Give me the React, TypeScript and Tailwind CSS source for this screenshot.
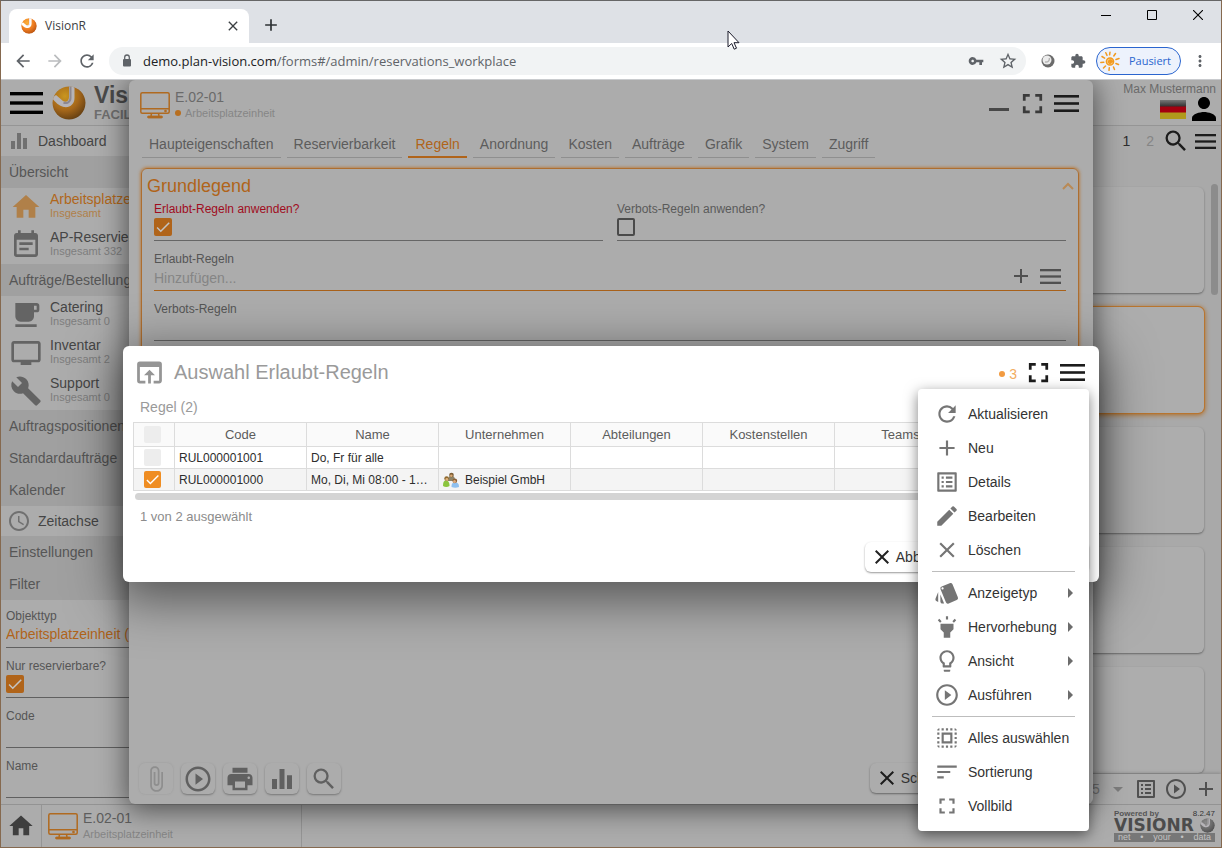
import React from "react";
import {
  MdAccessTime, MdAdd, MdArrowBack, MdArrowDropDown, MdArrowForward, MdArrowRight, MdAttachFile, MdBuild, MdCheck,
  MdClose, MdEdit, MdEqualizer, MdEventNote, MdFullscreen, MdHighlight, MdHome, MdLightbulbOutline,
  MdListAlt, MdLocalCafe, MdMoreVert, MdOpenInBrowser, MdPerson, MdPlayCircleOutline, MdPrint, MdRefresh,
  MdSearch, MdSelectAll, MdSort, MdStarBorder, MdStyle, MdTv, MdVpnKey,
} from "react-icons/md";

type Icon = React.ComponentType<{ className?: string }>;

function Burger({ className }: { className: string }) {
  return (
    <svg viewBox="0 0 25 17" preserveAspectRatio="none" fill="currentColor" className={className} aria-hidden="true">
      <rect width="25" height="2.6" />
      <rect y="7.2" width="25" height="2.6" />
      <rect y="14.4" width="25" height="2.6" />
    </svg>
  );
}

function Sphere({ className, id, dim, mono }: { className: string; id: string; dim?: boolean; mono?: boolean }) {
  const light = mono ? "#8a8a8a" : dim ? "#c9961f" : "#fbb03b";
  const mid = mono ? "#6c6c6c" : dim ? "#a5671a" : "#ee7d22";
  const dark = mono ? "#4c4c4c" : dim ? "#5f3c12" : "#b5500f";
  const band = dim || mono ? "#b6b4b8" : "#ffffff";
  return (
    <svg viewBox="0 0 34 34" className={className} aria-hidden="true">
      <defs>
        <radialGradient id={id} cx="0.38" cy="0.3" r="0.75">
          <stop offset="0" stopColor={light} />
          <stop offset="0.55" stopColor={mid} />
          <stop offset="1" stopColor={dark} />
        </radialGradient>
        <clipPath id={id + "-clip"}><circle cx="17" cy="17" r="16.5" /></clipPath>
      </defs>
      <g clipPath={`url(#${id}-clip)`}>
        <circle cx="17" cy="17" r="17" fill={`url(#${id})`} />
        <path d="M17 0v11c0 4-3 6-6 4L4 9 0 12c3 4 7 8 12 9 6 1 10.500-3 10.500-9V0z" fill={band} />
        <path d="M18.500 0v12c0 4-4 6-7 4.500" stroke={mono ? "#8a8a8a" : dim ? "#8d8890" : "#e9dfe6"} strokeWidth="2" fill="none" />
      </g>
    </svg>
  );
}

function Monitor() {
  return (
    <svg viewBox="0 0 30 27" className="h-[27px] w-[30px] shrink-0" fill="none" stroke="#b06a20" strokeWidth="1.500" aria-hidden="true">
      <rect x="0.800" y="0.800" width="28.400" height="20.400" rx="1.500" />
      <path d="M1 16.700h28M11.500 21.500l-.5 2.500M18.500 21.500l.5 2.500" />
      <rect x="7.500" y="24" width="15" height="2" rx="1" fill="#b06a20" strokeWidth="0.800" />
      <circle cx="25.500" cy="19" r="0.600" />
    </svg>
  );
}

function Check({ id, label, checked = false, dim = false, small = false }: { id: string; label?: string; checked?: boolean; dim?: boolean; small?: boolean }) {
  const tone = small
    ? "size-[17px] bg-[#ededed] checked:bg-[#ef8d22]"
    : "size-[18px] border-2 border-[#4a4a4a] checked:border-0 checked:bg-[#b0641a]";
  return (
    <span className="relative block w-fit">
      <input type="checkbox" id={id} aria-label={label} defaultChecked={checked} className={`peer block appearance-none rounded-xs ${tone}`} />
      <MdCheck className={`pointer-events-none absolute inset-0 hidden size-full peer-checked:block ${dim ? "text-[#c4c4c4]" : "text-white"}`} />
    </span>
  );
}

function BrowserChrome() {
  return (
    <header className="font-['Open_Sans','Noto_Sans',sans-serif]">
      <div className="flex h-[42px] items-end bg-[#dee1e6] pl-2">
        <div className="flex h-[34px] w-60 items-center rounded-t-lg bg-white pr-2 pl-3">
          <Sphere id="fav" className="size-4" />
          <span className="ml-2 flex-1 text-[12px] text-[#3c4043]">VisionR</span>
          <button aria-label="Tab schließen" className="flex size-4 items-center justify-center"><MdClose className="size-4 text-[#3c4043]" /></button>
        </div>
        <button aria-label="Neuer Tab" className="mb-2 ml-3 flex size-5 items-center justify-center"><MdAdd className="size-5 text-[#2c3033]" /></button>
        <div className="mb-[23px] ml-auto flex gap-9 pr-[18px]">
          <button aria-label="Minimieren">
            <svg viewBox="0 0 10 10" className="size-2.5"><path d="M0 5.500h10" stroke="#000" /></svg>
          </button>
          <button aria-label="Maximieren">
            <svg viewBox="0 0 10 10" className="size-2.5"><path d="M.5.5h9v9h-9z" fill="none" stroke="#000" /></svg>
          </button>
          <button aria-label="Schließen">
            <svg viewBox="0 0 10 10" className="size-2.5"><path d="M0 0l10 10M10 0L0 10" stroke="#000" strokeWidth="1.100" /></svg>
          </button>
        </div>
      </div>
      <div className="flex h-[37px] items-center border-b border-[#c9cbce] bg-white pl-3 text-[#5f6368]">
        <button aria-label="Zurück"><MdArrowBack className="size-5" /></button>
        <button aria-label="Vorwärts" className="ml-3 text-[#babcbe]"><MdArrowForward className="size-5" /></button>
        <button aria-label="Neu laden" className="ml-3"><MdRefresh className="size-5" /></button>
        <div className="ml-3 flex h-7 flex-1 items-center rounded-full bg-[#f1f3f4] pr-2 pl-2.5">
          <svg viewBox="0 0 16 16" className="size-4" aria-hidden="true">
            <rect x="4" y="6" width="8" height="7.500" rx="1" fill="#5f6368" />
            <path d="M5.700 6V4.300a2.300 2.300 0 014.600 0V6" fill="none" stroke="#5f6368" strokeWidth="1.300" />
          </svg>
          <a href="#/admin/reservations_workplace" className="ml-2 flex-1 text-[13px]">
            <span className="text-[#202124]">demo.plan-vision.com</span>/forms#/admin/reservations_workplace
          </a>
          <button aria-label="Passwörter"><MdVpnKey className="size-4" /></button>
          <button aria-label="Lesezeichen" className="ml-3.5"><MdStarBorder className="size-5" /></button>
        </div>
        <button aria-label="Erweiterung" className="ml-3.5">
          <svg viewBox="0 0 16 16" className="size-4">
            <circle cx="8" cy="8" r="6.500" fill="#6b6b6b" />
            <circle cx="7" cy="7" r="4.500" fill="#ececec" />
            <path d="M5 9c3 .5 4.500-1 4.500-4" stroke="#b5b5b5" strokeWidth="1.500" fill="none" />
          </svg>
        </button>
        <button aria-label="Erweiterungen" className="ml-3.5">
          <svg viewBox="0 0 24 24" className="size-4" fill="currentColor" aria-hidden="true">
            <path d="M20.500 11H19V7c0-1.100-.9-2-2-2h-4V3.500C13 2.120 11.880 1 10.500 1S8 2.120 8 3.500V5H4c-1.100 0-1.990.9-1.990 2v3.800H3.500c1.490 0 2.700 1.210 2.700 2.700s-1.210 2.700-2.700 2.700H2V20c0 1.100.9 2 2 2h3.800v-1.500c0-1.490 1.210-2.700 2.700-2.700s2.700 1.210 2.700 2.700V22H17c1.100 0 2-.9 2-2v-4h1.500c1.380 0 2.500-1.120 2.500-2.500S21.880 11 20.500 11z" />
          </svg>
        </button>
        <button className="ml-2.5 flex h-7 items-center rounded-full border border-[#2a65cf] bg-[#edf2fc] pr-[9px] pl-[3px] text-[11px] text-[#2a65cf]">
          <svg viewBox="0 0 20 20" className="mr-[9px] size-5" fill="none" stroke="#f29a1f" strokeWidth="1.500" strokeLinecap="round" aria-hidden="true">
            <circle cx="10" cy="10.500" r="3.600" fill="#fbd08a" />
            <path d="M10 10.500c1-.8 1.800.8.5 1.500s-2.500-1-1.500-2.300 3-.7 3.300 1M10 1.200l-.4 2.600M15.500 2.500L13.800 5M19 7.500l-3 1M18.500 13.500l-2.600-1M14.500 18.500l-1-2.500M9 19.300l.3-2.600M3.500 17l2-2M.8 11.500l3-.3M2 5.500l2.600 1.600M5.800 1.800L7 4.400" />
          </svg>
          Pausiert
        </button>
        <button aria-label="Menü" className="mr-3 ml-2.5"><MdMoreVert className="size-[18px]" /></button>
      </div>
    </header>
  );
}

function Category({ children }: { children: React.ReactNode }) {
  return <h2 className="flex h-8 items-center bg-[#a0a0a0] pl-2 text-[#565656]">{children}</h2>;
}

function NavEntry({ icon: I, title, sub, active = false }: { icon: Icon; title: string; sub: string; active?: boolean }) {
  return (
    <a href={"#" + title} className={`flex h-[38px] items-center gap-2 pl-[9px] ${active ? "text-[#b0671b]" : "text-[#454545]"}`}>
      <I className={`size-8 ${active ? "text-[#b08049]" : "text-[#646464]"}`} />
      <span className="flex flex-col pb-1">
        <span className="leading-4">{title}</span>
        <span className={`text-[11px] leading-3 ${active ? "text-[#b08049]" : "text-[#7e7e7e]"}`}>{sub}</span>
      </span>
    </a>
  );
}

function NavLine({ icon: I, title }: { icon: Icon; title: string }) {
  return (
    <a href={"#" + title} className="flex h-[30px] items-center gap-[7px] pl-1.5 text-[#454545]">
      <I className="size-6 text-[#707070]" />
      {title}
    </a>
  );
}

function FilterField({ id, label, value }: { id: string; label: string; value?: string }) {
  return (
    <div className="h-[50px] pl-[5px]">
      <div className="flex h-12 flex-col border-b border-[#606060] pt-2">
        <label htmlFor={id} className="text-[12px] leading-4 text-[#555]">{label}</label>
        <input id={id} defaultValue={value} className="h-5 bg-transparent text-[14px] text-[#b0641a] outline-none" />
      </div>
    </div>
  );
}

function Sidebar() {
  return (
    <nav className="w-[300px] shrink-0 bg-[#acacac]">
      <NavLine icon={MdEqualizer} title="Dashboard" />
      <Category>Übersicht</Category>
      <NavEntry icon={MdHome} title="Arbeitsplatzeinheiten" sub="Insgesamt" active />
      <NavEntry icon={MdEventNote} title="AP-Reservierungen" sub="Insgesamt 332" />
      <Category>Aufträge/Bestellungen</Category>
      <NavEntry icon={MdLocalCafe} title="Catering" sub="Insgesamt 0" />
      <NavEntry icon={MdTv} title="Inventar" sub="Insgesamt 2" />
      <NavEntry icon={MdBuild} title="Support" sub="Insgesamt 0" />
      <Category>Auftragspositionen</Category>
      <Category>Standardaufträge</Category>
      <Category>Kalender</Category>
      <NavLine icon={MdAccessTime} title="Zeitachse" />
      <Category>Einstellungen</Category>
      <Category>Filter</Category>
      <FilterField id="objekttyp" label="Objekttyp" value="Arbeitsplatzeinheit (Standard)" />
      <div className="h-[50px] pl-[5px]">
        <div className="h-12 border-b border-[#606060] pt-2">
          <label htmlFor="reservierbar" className="block text-[12px] leading-4 text-[#555]">Nur reservierbare?</label>
          <div className="pt-px"><Check id="reservierbar" checked dim /></div>
        </div>
      </div>
      <FilterField id="code" label="Code" />
      <FilterField id="name" label="Name" />
    </nav>
  );
}

function Results() {
  const cards = [false, true, false, false, false];
  return (
    <main className="flex flex-1 flex-col bg-[#a9a9a9]">
      <div className="flex h-[30px] items-center justify-end pr-[5px]">
        <a href="#1" className="px-2 text-[#2e2e2e]">1</a>
        <a href="#2" className="px-2 text-[#858585]">2</a>
        <button aria-label="Suchen" className="text-[#1c1c1c]"><MdSearch className="size-7" /></button>
        <button aria-label="Menü" className="ml-[5px] text-[#1c1c1c]"><Burger className="h-[15px] w-[21px]" /></button>
      </div>
      <div className="flex flex-1 gap-[7px] pr-[3px]">
        <ul className="flex flex-1 flex-col gap-3.5 pt-[31px]">
          {cards.map((selected, i) => (
            <li
              key={i}
              className={`h-[106px] rounded-md bg-[#adadad] ${selected ? "shadow-[0_0_0_1px_#b8752f,0_1px_5px_1px_#b06a20]" : "shadow-[0_1px_2px_#666]"}`}
            />
          ))}
        </ul>
        <div className="mt-7 h-[111px] w-[7px] rounded-full bg-[#8c8c8c]" />
      </div>
      <div className="mt-px flex h-[30px] items-center justify-end bg-[#acacac] pr-[3px] text-[#505050] shadow-[0_-1px_3px_#888]">
        <select aria-label="Einträge pro Seite" defaultValue="5" className="w-3.5 appearance-none bg-transparent text-[#777]">
          <option>5</option>
        </select>
        <MdArrowDropDown className="size-6 text-[#7c7c7c]" />
        <button aria-label="Details" className="ml-1"><MdListAlt className="size-6" /></button>
        <button aria-label="Ausführen" className="ml-1.5"><MdPlayCircleOutline className="size-6" /></button>
        <button aria-label="Neu" className="ml-1.5"><MdAdd className="size-6" /></button>
      </div>
    </main>
  );
}

function Powered() {
  return (
    <div className="w-[101px] pt-1 text-[#555]">
      <div className="flex justify-between text-[8px] leading-[9px]">
        <span className="font-bold">Powered by</span>
        <span className="text-[#333]">8.2.47</span>
      </div>
      <div className="flex items-center justify-between">
        <span className="font-['DejaVu_Sans',sans-serif] text-[17px] leading-[15px] font-bold text-[#4c4c4c]">VISIONR</span>
        <Sphere id="foot" mono className="size-[15px]" />
      </div>
      <div className="flex h-[9px] items-center justify-between bg-[#777] px-1 text-[9px] leading-[9px] text-[#c2c2c2]">
        <span>net</span><span>•</span><span>your</span><span>•</span><span>data</span>
      </div>
    </div>
  );
}

const tabs = ["Haupteigenschaften", "Reservierbarkeit", "Regeln", "Anordnung", "Kosten", "Aufträge", "Grafik", "System", "Zugriff"];
const tools: [string, Icon][] = [
  ["Anhang", MdAttachFile], ["Ausführen", MdPlayCircleOutline], ["Drucken", MdPrint], ["Statistik", MdEqualizer], ["Suchen", MdSearch],
];

function ObjectDialog() {
  return (
    <section className="absolute inset-x-32 top-0 bottom-[43px] z-10 flex flex-col rounded-md bg-[#acacac] px-2.5 pb-2.5 shadow-[0_4px_28px_2px_rgba(0,0,0,0.55)]">
      <div className="flex h-[50px] items-center pr-1 pl-px">
        <Monitor />
        <div className="ml-[5px] flex-1">
          <h1 className="leading-4 text-[#6a6a6a]">E.02-01</h1>
          <p className="flex items-center gap-1 text-[11px] leading-4 text-[#868686]">
            <span className="size-1.5 rounded-full bg-[#b86f20]" />
            Arbeitsplatzeinheit
          </p>
        </div>
        <div className="flex items-center pb-[3px]">
          <button aria-label="Minimieren" className="mt-3 h-[3px] w-5 bg-[#484848]" />
          <button aria-label="Vollbild" className="ml-[7px] text-[#3a3a3a]"><MdFullscreen className="size-[33px]" /></button>
          <button aria-label="Menü" className="ml-[5px] text-[#1b1b1b]"><Burger className="h-[17px] w-[25px]" /></button>
        </div>
      </div>
      <div role="tablist" className="flex gap-1.5 pl-[3px]">
        {tabs.map((t) => (
          <button
            key={t}
            role="tab"
            aria-selected={t === "Regeln"}
            className={`h-7 border-b px-[7px] ${t === "Regeln" ? "border-[#b0641a] text-[#b0641a] shadow-[inset_0_-1px_#b0641a]" : "border-[#8f8f8f] text-[#5c5c5c]"}`}
          >
            {t}
          </button>
        ))}
      </div>
      <div className="mt-2.5 mr-1 ml-0.5 h-[210px] rounded-md border border-[#ad6e30] px-3 shadow-[0_0_3px_1px_#b5834f]">
        <div className="-ml-[7px] flex h-[22px] items-center justify-between pt-3">
          <h2 className="text-[18px] leading-5 text-[#b0641a]">Grundlegend</h2>
          <button aria-label="Einklappen" className="-mr-2">
            <svg viewBox="0 0 12 8" className="h-2 w-3"><path d="M1 7l5-5 5 5" fill="none" stroke="#b98a56" strokeWidth="2" /></svg>
          </button>
        </div>
        <div className="flex gap-3.5">
          <div className="h-[50px] flex-1 border-b border-[#666] pt-2.5">
            <label htmlFor="erlaubt" className="block text-[12px] leading-4 text-[#a00d1e]">Erlaubt-Regeln anwenden?</label>
            <div className="pt-px"><Check id="erlaubt" checked dim /></div>
          </div>
          <div className="h-[50px] flex-1 border-b border-[#666] pt-2.5">
            <label htmlFor="verbot" className="block text-[12px] leading-4 text-[#5a5a5a]">Verbots-Regeln anwenden?</label>
            <div className="pt-px"><Check id="verbot" dim /></div>
          </div>
        </div>
        <div className="flex h-[50px] items-start border-b border-[#a8611a] pt-2.5">
          <div className="flex flex-1 flex-col">
            <label htmlFor="erlaubt-regeln" className="text-[12px] leading-4 text-[#555]">Erlaubt-Regeln</label>
            <input id="erlaubt-regeln" placeholder="Hinzufügen..." className="h-[21px] bg-transparent text-[14px] outline-none placeholder:text-[#858585]" />
          </div>
          <div className="flex items-center gap-[7px] pt-[13px] pr-[5px] text-[#505050]">
            <button aria-label="Hinzufügen"><MdAdd className="size-6" /></button>
            <button aria-label="Auswahl"><Burger className="h-[15px] w-[21px]" /></button>
          </div>
        </div>
        <div className="flex h-[50px] flex-col border-b border-[#666] pt-2.5">
          <label htmlFor="verbots-regeln" className="text-[12px] leading-4 text-[#555]">Verbots-Regeln</label>
          <input id="verbots-regeln" className="h-5 bg-transparent text-[14px] outline-none" />
        </div>
      </div>
      <div className="mt-auto flex gap-2">
        {tools.map(([name, I], i) => (
          <button
            key={name}
            aria-label={name}
            disabled={i === 0}
            className="flex h-[31px] w-[34px] items-center justify-center rounded-md text-[#606060] shadow-[0_1px_2px_#777] disabled:text-[#8e8e8e] disabled:shadow-[0_0_2px_#999]"
          >
            <I className={i === 0 || i === 4 ? "size-7" : "size-[30px]"} />
          </button>
        ))}
        <div className="ml-auto flex gap-2">
          <button className="flex h-[30px] items-center gap-0.5 rounded-md pr-[9px] pl-[5px] text-[#333] shadow-[0_1px_2px_#666]">
            <MdClose className="size-6 text-[#1c1c1c]" />Schließen
          </button>
          <button className="flex h-[30px] items-center gap-0.5 rounded-md pr-[9px] pl-[5px] text-[#333] shadow-[0_1px_2px_#666]">
            <MdCheck className="size-6 text-[#1c1c1c]" />Speichern
          </button>
        </div>
      </div>
    </section>
  );
}

type Item = { icon: Icon; label: string; sub?: boolean };
const menu: Item[][] = [
  [
    { icon: MdRefresh, label: "Aktualisieren" }, { icon: MdAdd, label: "Neu" }, { icon: MdListAlt, label: "Details" },
    { icon: MdEdit, label: "Bearbeiten" }, { icon: MdClose, label: "Löschen" },
  ],
  [
    { icon: MdStyle, label: "Anzeigetyp", sub: true }, { icon: MdHighlight, label: "Hervorhebung", sub: true },
    { icon: MdLightbulbOutline, label: "Ansicht", sub: true }, { icon: MdPlayCircleOutline, label: "Ausführen", sub: true },
  ],
  [{ icon: MdSelectAll, label: "Alles auswählen" }, { icon: MdSort, label: "Sortierung" }, { icon: MdFullscreen, label: "Vollbild" }],
];

function ContextMenu() {
  return (
    <div role="menu" className="absolute top-[43px] right-2.5 z-30 w-[171px] rounded-sm bg-white py-2 text-[#333] shadow-[0_4px_14px_rgba(0,0,0,0.5)]">
      {menu.map((group, g) => (
        <div key={g}>
          {g > 0 && <hr className="mx-3.5 my-1 border-[#bdbdbd]" />}
          {group.map(({ icon: I, label, sub }) => (
            <button key={label} role="menuitem" className="flex h-[34px] w-full items-center pr-[7px] pl-4 text-left whitespace-nowrap">
              <I className="mr-2 size-[26px] shrink-0 text-[#757575]" />
              <span className="flex-1">{label}</span>
              {sub && <MdArrowRight className="-ml-2 size-6 shrink-0 text-[#6c6c6c]" />}
            </button>
          ))}
        </div>
      ))}
    </div>
  );
}

function People() {
  return (
    <svg viewBox="0 0 16 16" className="size-4 shrink-0" aria-hidden="true">
      <path d="M5 9c0-4 1-5 3.500-5S12 5 12 9z" fill="#8d8367" />
      <circle cx="8.500" cy="3" r="2.300" fill="#7b5c33" />
      <circle cx="8.300" cy="3.800" r="1.300" fill="#d9a873" />
      <path d="M0 14c0-4 1-5.500 3-5.500S6.500 10 6.500 14c-2 1.200-4.500 1.200-6.500 0z" fill="#8bc53f" />
      <circle cx="3.600" cy="6.600" r="2.300" fill="#8f6a30" />
      <circle cx="3.800" cy="7.400" r="1.400" fill="#e0b27b" />
      <path d="M8.500 15c0-3.500 1-4.500 3.500-4.500s4 1 4 4.500c-2 1-5.500 1-7.500 0z" fill="#8fc0ef" />
      <circle cx="11.800" cy="8.800" r="2.400" fill="#8a5f36" />
      <circle cx="11.500" cy="9.600" r="1.500" fill="#e0ab7b" />
    </svg>
  );
}

const columns = ["Code", "Name", "Unternehmen", "Abteilungen", "Kostenstellen", "Teams", "Personen", "Gruppen"];
const rows = [
  { code: "RUL000001001", name: "Do, Fr für alle", company: "", checked: false },
  { code: "RUL000001000", name: "Mo, Di, Mi 08:00 - 18:00", company: "Beispiel GmbH", checked: true },
];

function SelectionDialog() {
  return (
    <div className="absolute inset-0 z-20 flex items-center justify-center pt-px">
      <section role="dialog" aria-labelledby="auswahl" className="relative w-4/5 rounded-md bg-white px-2.5 pb-2.5 shadow-[0_12px_50px_6px_rgba(0,0,0,0.5)]">
        <div className="flex h-[52px] items-center pr-1">
          <MdOpenInBrowser className="size-[33px] text-[#959595]" />
          <h1 id="auswahl" className="ml-2 flex-1 text-[20px] text-[#9a9a9a]">Auswahl Erlaubt-Regeln</h1>
          <span className="mt-1 mr-[5px] flex items-center gap-1 text-[#f2ad62]">
            <span className="size-1.5 rounded-full bg-[#f29b40]" />3
          </span>
          <button aria-label="Vollbild" className="text-[#1c1c1c]"><MdFullscreen className="size-[33px]" /></button>
          <button aria-label="Menü" aria-haspopup="menu" aria-expanded="true" className="ml-[5px] text-[#1c1c1c]"><Burger className="h-[17px] w-[25px]" /></button>
        </div>
        <h2 className="pl-[7px] leading-[18px] text-[#9a9a9a]">Regel (2)</h2>
        <div className="mt-1.5 overflow-hidden border-t border-l border-[#dcdcdc]">
          <table className="w-[1097px] table-fixed border-separate border-spacing-0 text-[12px] text-[#2d2d2d]">
            <thead>
              <tr className="h-6 bg-[#fafafa] text-[13px] text-[#5c5c5c]">
                <th className="w-[41px] border-r border-b border-[#dcdcdc] p-0">
                  <div className="flex justify-center pr-1"><Check id="alle" label="Alle auswählen" small /></div>
                </th>
                {columns.map((c) => (
                  <th key={c} className="w-[132px] border-r border-b border-[#dcdcdc] p-0 font-normal">{c}</th>
                ))}
              </tr>
            </thead>
            <tbody>
              {rows.map((r) => (
                <tr key={r.code} className={`h-[22px] ${r.checked ? "bg-[#f4f4f4]" : ""}`}>
                  <td className="border-r border-b border-[#dcdcdc] p-0">
                    <div className="flex justify-center pr-1"><Check id={r.code} label={r.code} checked={r.checked} small /></div>
                  </td>
                  <td className="border-r border-b border-[#dcdcdc] p-0 pl-1">{r.code}</td>
                  <td className="truncate border-r border-b border-[#dcdcdc] p-0 pr-2 pl-1">{r.name}</td>
                  <td className="border-r border-b border-[#dcdcdc] p-0 pl-1">
                    {r.company && <span className="flex items-center gap-1.5"><People />{r.company}</span>}
                  </td>
                  {columns.slice(3).map((c) => <td key={c} className="border-r border-b border-[#dcdcdc] p-0" />)}
                </tr>
              ))}
            </tbody>
          </table>
        </div>
        <div className="mt-0.5 ml-0.5 h-[7px] rounded-full bg-[#d4d4d4]" />
        <p className="mt-2 pl-[7px] text-[13px] leading-[18px] text-[#8c8c8c]">1 von 2 ausgewählt</p>
        <div className="mt-4 flex justify-end gap-2">
          <button className="flex h-[30px] items-center gap-0.5 rounded-md pr-[9px] pl-[5px] text-[#333] shadow-[0_1px_2px_#999]">
            <MdClose className="size-6 text-[#222]" />Abbrechen
          </button>
          <button className="flex h-[30px] items-center gap-0.5 rounded-md pr-[9px] pl-[5px] text-[#333] shadow-[0_1px_2px_#999]">
            <MdCheck className="size-6 text-[#222]" />Auswählen
          </button>
        </div>
        <ContextMenu />
      </section>
    </div>
  );
}

export default function App() {
  return (
    <div className="relative flex min-h-screen flex-col border border-t-[#666] border-r-[#85694f] border-b-[#85694f] border-l-[#85694f] font-['Liberation_Sans',Arial,sans-serif] text-[14px] leading-5">
      <BrowserChrome />
      <svg viewBox="0 0 13 20" className="pointer-events-none absolute top-[29px] left-[726px] h-5 w-[13px]" aria-hidden="true">
        <path d="M1 1v16l3.700-3.500 2.500 5.700 2.300-1-2.500-5.500h5z" fill="#fff" stroke="#1a1a2a" />
      </svg>
      <div className="relative flex flex-1 flex-col overflow-hidden bg-[#acacac]">
        <div className="flex h-[46px] items-center border-b border-[#959595] pr-[5px] pl-[9px]">
          <button aria-label="Navigation" className="text-black"><Burger className="h-[22px] w-[33px]" /></button>
          <Sphere id="brand" dim className="ml-[9px] size-[34px]" />
          <div className="ml-2 font-bold">
            <p className="text-[23px] leading-6 text-[#4a4a4a]">VisionR</p>
            <p className="text-[13px] leading-4 text-[#6e6e6e]">FACILITY</p>
          </div>
          <div className="ml-auto flex h-full flex-col items-end pt-[3px]">
            <span className="text-[12px] leading-3 text-[#6a6a6a]">Max Mustermann</span>
            <div className="flex h-7 items-center">
              <svg viewBox="0 0 26 19" className="h-[19px] w-[26px]" aria-label="Deutsch">
                <defs>
                  <linearGradient id="gloss" x1="0" y1="0" x2="0" y2="1">
                    <stop offset="0" stopColor="#777" /><stop offset="1" stopColor="#2c2c2c" />
                  </linearGradient>
                </defs>
                <rect width="26" height="7" fill="url(#gloss)" />
                <rect y="6.500" width="26" height="6.500" fill="#a3000f" />
                <rect y="12.500" width="26" height="6.500" fill="#b09a1c" />
              </svg>
              <button aria-label="Benutzer" className="-mr-1.5"><MdPerson className="size-9 text-black" /></button>
            </div>
          </div>
        </div>
        <div className="flex flex-1">
          <Sidebar />
          <Results />
        </div>
        <footer className="flex h-[43px] border-t border-[#939393] bg-[#acacac]">
          <a href="#home" aria-label="Start" className="flex w-[41px] items-center justify-center border-r border-[#959595]">
            <MdHome className="size-7 text-[#3e3e3e]" />
          </a>
          <a href="#E.02-01" className="flex w-[260px] items-center gap-[5px] border-r border-[#959595] pl-1.5">
            <Monitor />
            <span className="flex flex-col">
              <span className="leading-4 text-[#5d5d5d]">E.02-01</span>
              <span className="text-[11px] leading-4 text-[#858585]">Arbeitsplatzeinheit</span>
            </span>
          </a>
          <div className="ml-auto pr-1.5"><Powered /></div>
        </footer>
        <ObjectDialog />
        <SelectionDialog />
      </div>
    </div>
  );
}
